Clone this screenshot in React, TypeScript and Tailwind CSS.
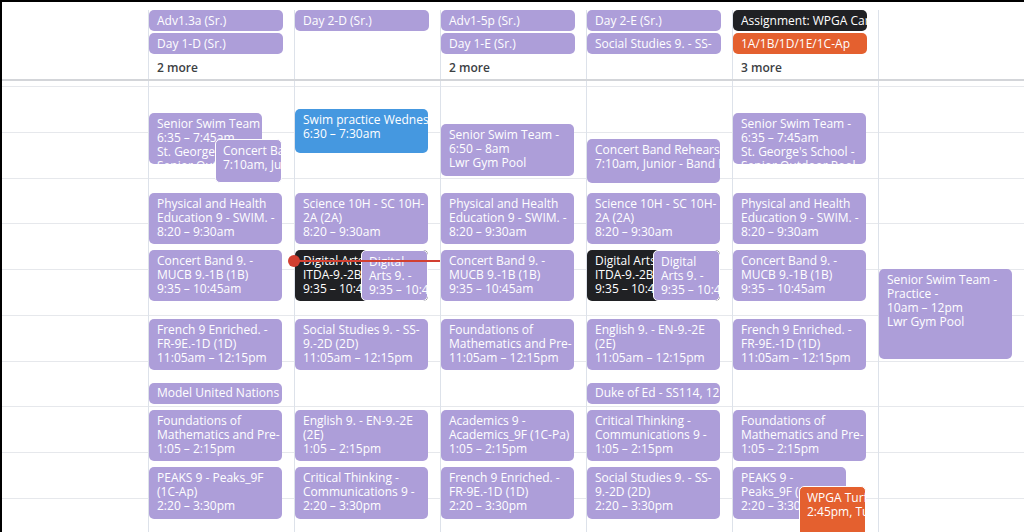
import React from "react";

type Tone = "lav" | "blue" | "black" | "orange";

type CalEvent = {
  col: number;
  start: string;
  end: string;
  lines: string[];
  tone?: Tone;
  left?: number;
  width?: number;
  outlined?: boolean;
};

type Chip = { text: string; tone: Tone };

const HOUR = 45.75;
const GRID_TOP_PAD = 5;
const FIRST_HOUR = 6;

const toneClass: Record<Tone, string> = {
  lav: "bg-[#ad9ed9]",
  blue: "bg-[#4598e0]",
  black: "bg-[#202124]",
  orange: "bg-[#e4602f]",
};

const allDay: { chips: Chip[]; more?: string }[] = [
  {
    chips: [
      { text: "Adv1.3a (Sr.)", tone: "lav" },
      { text: "Day 1-D (Sr.)", tone: "lav" },
    ],
    more: "2 more",
  },
  { chips: [{ text: "Day 2-D (Sr.)", tone: "lav" }] },
  {
    chips: [
      { text: "Adv1-5p (Sr.)", tone: "lav" },
      { text: "Day 1-E (Sr.)", tone: "lav" },
    ],
    more: "2 more",
  },
  {
    chips: [
      { text: "Day 2-E (Sr.)", tone: "lav" },
      { text: "Social Studies 9. - SS-", tone: "lav" },
    ],
  },
  {
    chips: [
      { text: "Assignment: WPGA Career Day", tone: "black" },
      { text: "1A/1B/1D/1E/1C-Ap", tone: "orange" },
    ],
    more: "3 more",
  },
  { chips: [] },
];

const events: CalEvent[] = [
  // Monday
  { col: 0, start: "6:35", end: "7:45", width: 113, lines: ["Senior Swim Team -", "6:35 – 7:45am", "St. George's School -", "Senior Outdoor Pool"] },
  { col: 0, start: "7:10", end: "8:10", left: 66, width: 67, outlined: true, lines: ["Concert Band Rehearsal", "7:10am, Junior - Band Room"] },
  { col: 0, start: "8:20", end: "9:30", lines: ["Physical and Health", "Education 9 - SWIM. -", "8:20 – 9:30am"] },
  { col: 0, start: "9:35", end: "10:45", lines: ["Concert Band 9. -", "MUCB 9.-1B (1B)", "9:35 – 10:45am"] },
  { col: 0, start: "11:05", end: "12:15", lines: ["French 9 Enriched. -", "FR-9E.-1D (1D)", "11:05am – 12:15pm"] },
  { col: 0, start: "12:30", end: "13:00", lines: ["Model United Nations (MUN), 12:30pm"] },
  { col: 0, start: "13:05", end: "14:15", lines: ["Foundations of", "Mathematics and Pre-", "1:05 – 2:15pm"] },
  { col: 0, start: "14:20", end: "15:30", lines: ["PEAKS 9 - Peaks_9F", "(1C-Ap)", "2:20 – 3:30pm"] },
  // Tuesday
  { col: 1, start: "6:30", end: "7:30", tone: "blue", lines: ["Swim practice Wednesday", "6:30 – 7:30am"] },
  { col: 1, start: "8:20", end: "9:30", lines: ["Science 10H - SC 10H-", "2A (2A)", "8:20 – 9:30am"] },
  { col: 1, start: "9:35", end: "10:45", tone: "black", lines: ["Digital Arts 9. -", "ITDA-9.-2B (2B)", "9:35 – 10:45am"] },
  { col: 1, start: "9:35", end: "10:45", left: 66, width: 67, outlined: true, lines: ["Digital", "Arts 9. -", "9:35 – 10:45am"] },
  { col: 1, start: "11:05", end: "12:15", lines: ["Social Studies 9. - SS-", "9.-2D (2D)", "11:05am – 12:15pm"] },
  { col: 1, start: "13:05", end: "14:15", lines: ["English 9. - EN-9.-2E", "(2E)", "1:05 – 2:15pm"] },
  { col: 1, start: "14:20", end: "15:30", lines: ["Critical Thinking -", "Communications 9 -", "2:20 – 3:30pm"] },
  // Wednesday
  { col: 2, start: "6:50", end: "8:00", lines: ["Senior Swim Team -", "6:50 – 8am", "Lwr Gym Pool"] },
  { col: 2, start: "8:20", end: "9:30", lines: ["Physical and Health", "Education 9 - SWIM. -", "8:20 – 9:30am"] },
  { col: 2, start: "9:35", end: "10:45", lines: ["Concert Band 9. -", "MUCB 9.-1B (1B)", "9:35 – 10:45am"] },
  { col: 2, start: "11:05", end: "12:15", lines: ["Foundations of", "Mathematics and Pre-", "11:05am – 12:15pm"] },
  { col: 2, start: "13:05", end: "14:15", lines: ["Academics 9 -", "Academics_9F (1C-Pa)", "1:05 – 2:15pm"] },
  { col: 2, start: "14:20", end: "15:30", lines: ["French 9 Enriched. -", "FR-9E.-1D (1D)", "2:20 – 3:30pm"] },
  // Thursday
  { col: 3, start: "7:10", end: "8:10", lines: ["Concert Band Rehearsal", "7:10am, Junior - Band Room"] },
  { col: 3, start: "8:20", end: "9:30", lines: ["Science 10H - SC 10H-", "2A (2A)", "8:20 – 9:30am"] },
  { col: 3, start: "9:35", end: "10:45", tone: "black", lines: ["Digital Arts 9. -", "ITDA-9.-2B (2B)", "9:35 – 10:45am"] },
  { col: 3, start: "9:35", end: "10:45", left: 66, width: 67, outlined: true, lines: ["Digital", "Arts 9. -", "9:35 – 10:45am"] },
  { col: 3, start: "11:05", end: "12:15", lines: ["English 9. - EN-9.-2E", "(2E)", "11:05am – 12:15pm"] },
  { col: 3, start: "12:30", end: "13:00", lines: ["Duke of Ed - SS114, 12:30pm"] },
  { col: 3, start: "13:05", end: "14:15", lines: ["Critical Thinking -", "Communications 9 -", "1:05 – 2:15pm"] },
  { col: 3, start: "14:20", end: "15:30", lines: ["Social Studies 9. - SS-", "9.-2D (2D)", "2:20 – 3:30pm"] },
  // Friday
  { col: 4, start: "6:35", end: "7:45", lines: ["Senior Swim Team -", "6:35 – 7:45am", "St. George's School -", "Senior Outdoor Pool"] },
  { col: 4, start: "8:20", end: "9:30", lines: ["Physical and Health", "Education 9 - SWIM. -", "8:20 – 9:30am"] },
  { col: 4, start: "9:35", end: "10:45", lines: ["Concert Band 9. -", "MUCB 9.-1B (1B)", "9:35 – 10:45am"] },
  { col: 4, start: "11:05", end: "12:15", lines: ["French 9 Enriched. -", "FR-9E.-1D (1D)", "11:05am – 12:15pm"] },
  { col: 4, start: "13:05", end: "14:15", lines: ["Foundations of", "Mathematics and Pre-", "1:05 – 2:15pm"] },
  { col: 4, start: "14:20", end: "15:30", width: 113, lines: ["PEAKS 9 -", "Peaks_9F (1C-Ap)", "2:20 – 3:30pm"] },
  { col: 4, start: "14:44", end: "16:00", tone: "orange", left: 66, width: 67, outlined: true, lines: ["WPGA Turf Day", "2:45pm, Turf Field"] },
  // Saturday
  { col: 5, start: "10:00", end: "12:00", lines: ["Senior Swim Team -", "Practice -", "10am – 12pm", "Lwr Gym Pool"] },
];

function minutes(t: string) {
  const [h, m] = t.split(":").map(Number);
  return h * 60 + m;
}

function offsetFor(t: string) {
  return GRID_TOP_PAD + ((minutes(t) - FIRST_HOUR * 60) / 60) * HOUR;
}

function EventBlock({ ev }: { ev: CalEvent }) {
  const top = offsetFor(ev.start);
  const height = ((minutes(ev.end) - minutes(ev.start)) / 60) * HOUR - 2;
  const short = height < 30;
  return (
    <div
      className={`absolute overflow-hidden whitespace-nowrap rounded-[5px] text-[12px] leading-[14px] text-white ${toneClass[ev.tone ?? "lav"]} ${
        ev.outlined ? "border border-white pl-[7px]" : "pl-2"
      } ${short ? "pt-[3px]" : "pt-1"}`}
      style={{ top, height, left: ev.left ?? 0, width: ev.width ?? 133 }}
    >
      {ev.lines.map((l, i) => (
        <div key={i}>{l}</div>
      ))}
    </div>
  );
}

function AllDayCell({ chips, more }: { chips: Chip[]; more?: string }) {
  return (
    <div className="mt-2 flex w-[146px] shrink-0 flex-col gap-[2px] border-l border-[#dde2ea]">
      {chips.map((c, i) => (
        <div
          key={i}
          className={`h-[21px] w-[134px] overflow-hidden whitespace-nowrap rounded-[5px] pl-2 text-[12px] leading-[22px] text-white ${toneClass[c.tone]}`}
        >
          {c.text}
        </div>
      ))}
      {more && (
        <div className="pl-2 text-[12px] font-semibold leading-[23px] text-[#3c4043]">{more}</div>
      )}
    </div>
  );
}

function HourSlots() {
  return (
    <>
      <div className="h-[5px]" />
      {Array.from({ length: 10 }).map((_, i) => (
        <div key={i} className="h-[45.75px] border-t border-[#e6e8ec]" />
      ))}
    </>
  );
}

export default function App() {
  const nowTop = 180;
  return (
    <div
      className="flex h-[532px] w-[1024px] flex-col overflow-hidden border-l-2 border-t-2 border-black bg-white"
      style={{ fontFamily: "'Open Sans', Roboto, Arial, sans-serif" }}
    >
      {/* all-day row */}
      <div className="flex h-[77px] shrink-0">
        <div className="w-[146px] shrink-0" />
        {allDay.map((d, i) => (
          <AllDayCell key={i} chips={d.chips} more={d.more} />
        ))}
      </div>
      <div className="h-[2px] shrink-0 bg-[#d3d5d9]" />

      {/* timed grid */}
      <div className="flex flex-1">
        <div className="w-[146px] shrink-0">
          <HourSlots />
        </div>
        {allDay.map((_, col) => (
          <div key={col} className="relative w-[146px] shrink-0 border-l border-[#dde2ea]">
            <HourSlots />
            {events
              .filter((e) => e.col === col)
              .map((e, i) => (
                <EventBlock key={i} ev={e} />
              ))}
            {col === 1 && (
              <>
                <div
                  className="absolute left-0 right-0 z-10 h-[2px] bg-[#d23f31]"
                  style={{ top: nowTop - 1 }}
                />
                <div
                  className="absolute left-[-7px] z-10 h-[12px] w-[12px] rounded-full bg-[#d23f31]"
                  style={{ top: nowTop - 6 }}
                />
              </>
            )}
          </div>
        ))}
      </div>
    </div>
  );
}
